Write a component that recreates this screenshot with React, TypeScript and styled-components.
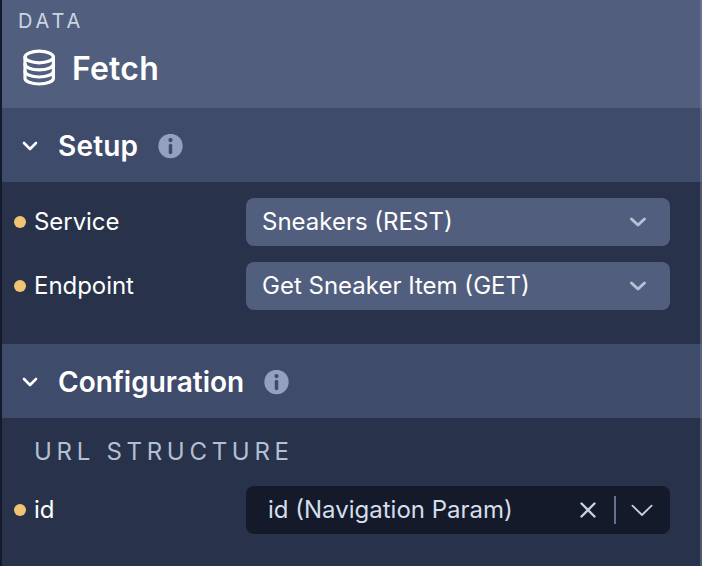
import React from "react";
import styled, { createGlobalStyle } from "styled-components";

const GlobalStyle = createGlobalStyle`
  * { box-sizing: border-box; }
  body { margin: 0; background: #28324a; }
`;

const Panel = styled.main`
  width: 702px;
  height: 566px;
  overflow: hidden;
  display: flex;
  flex-direction: column;
  background: #28324a;
  border-left: 2px solid #141a2b;
  color: #fff;
  font-family: Inter, "Liberation Sans", sans-serif;
  box-shadow: inset -2px 0 #4f586d;
`;

const Header = styled.header`
  height: 108px;
  flex: none;
  padding: 9px 16px 0;
  background: #515e7d;
  border-right: 2px solid #677190;
`;

const Category = styled.div`
  font-size: 20px;
  line-height: 24px;
  letter-spacing: 3.8px;
  color: #cbd5e4;
`;

const TitleRow = styled.div`
  display: flex;
  align-items: center;
  gap: 16px;
  height: 40px;
  margin-top: 15px;
  padding-left: 4px;
`;

const Title = styled.h1`
  margin: 2px 0 0;
  font-size: 32px;
  line-height: 40px;
  font-weight: 600;
  letter-spacing: 0.2px;
`;

const SectionBar = styled.div`
  display: flex;
  align-items: center;
  height: 74px;
  flex: none;
  padding: 2px 20px 0 19px;
  background: #3f4b6b;
  border-right: 2px solid #596480;
`;

const SectionTitle = styled.h2<{ $spacing: number }>`
  margin: 0 19.5px 0 19px;
  font-size: 28px;
  line-height: 36px;
  font-weight: 600;
  letter-spacing: ${(p) => p.$spacing}px;
`;

const Fields = styled.div<{ $height: number; $top: number }>`
  display: flex;
  flex-direction: column;
  gap: 16px;
  height: ${(p) => p.$height}px;
  flex: none;
  padding: ${(p) => p.$top}px 30px 0 12px;
`;

const Field = styled.div`
  display: grid;
  grid-template-columns: 12px 204px 424px;
  column-gap: 8px;
  align-items: center;
  height: 48px;
  font-size: 24px;
  line-height: 32px;
`;

const Dot = styled.span`
  width: 12px;
  height: 12px;
  border-radius: 50%;
  background: #f2c374;
`;

const Label = styled.span`
  letter-spacing: -0.05px;
`;

const Select = styled.div`
  display: flex;
  align-items: center;
  justify-content: space-between;
  height: 48px;
  padding: 0 22px 0 16px;
  border-radius: 8px;
  background: #515e7d;
`;

const Combo = styled(Select)`
  padding: 0 16px 0 22px;
  background: #141a29;
  color: #d5deec;
`;

const Controls = styled.div`
  display: flex;
  align-items: center;
`;

const Divider = styled.span`
  width: 2px;
  height: 28px;
  margin: 0 14px 0 17px;
  background: #65718f;
`;

const GroupTitle = styled.h3`
  margin: 0 0 2px 20px;
  font-size: 24px;
  line-height: 32px;
  height: 32px;
  font-weight: 400;
  letter-spacing: 4.7px;
  color: #b3c0d4;
`;

const Icon = styled.svg`
  display: block;
  flex: none;
  fill: none;
  stroke-linecap: round;
  stroke-linejoin: round;
`;

const DatabaseIcon = () => (
  <Icon width="34" height="38" viewBox="0 0 34 38" stroke="#fff" strokeWidth="3.2">
    <ellipse cx="17.2" cy="8" rx="14.2" ry="5.8" />
    <path d="M3 8v21.2c0 3.2 6.4 5.8 14.2 5.8s14.2-2.6 14.2-5.8V8" />
    <path d="M3 15.1c0 3.2 6.4 5.8 14.2 5.8s14.2-2.6 14.2-5.8M3 22.2c0 3.2 6.4 5.8 14.2 5.8s14.2-2.6 14.2-5.8" />
  </Icon>
);

const SectionChevron = () => (
  <Icon width="18" height="12" viewBox="0 0 18 12" stroke="#fff" strokeWidth="2.6">
    <path d="M3 3l6 6 6-6" />
  </Icon>
);

const InfoIcon = () => (
  <Icon width="25" height="25" viewBox="0 0 25 25">
    <circle cx="12.5" cy="12" r="12.2" fill="#959fbe" />
    <circle cx="12.5" cy="6.1" r="2.1" fill="#3f4b6b" />
    <path d="M12.5 11.5v7" stroke="#3f4b6b" strokeWidth="3.5" />
  </Icon>
);

const SelectChevron = () => (
  <Icon width="20" height="14" viewBox="0 0 20 14" stroke="#b7c1d5" strokeWidth="3">
    <path d="M3.5 4L10 10l6.5-6" />
  </Icon>
);

const ClearIcon = () => (
  <Icon width="18" height="18" viewBox="0 0 18 18" stroke="#c6d0e0" strokeWidth="2.4">
    <path d="M2.5 2.5l13 13M15.5 2.5l-13 13" />
  </Icon>
);

const ComboChevron = () => (
  <Icon width="24" height="14" viewBox="0 0 24 14" stroke="#c6d0e0" strokeWidth="1.8">
    <path d="M2.4 2.6L12 12l9.6-9.4" />
  </Icon>
);

function Section({ title, spacing = 0 }: { title: string; spacing?: number }) {
  return (
    <SectionBar>
      <SectionChevron />
      <SectionTitle $spacing={spacing}>{title}</SectionTitle>
      <InfoIcon />
    </SectionBar>
  );
}

function SelectField({ label, value }: { label: string; value: string }) {
  return (
    <Field>
      <Dot />
      <Label>{label}</Label>
      <Select>
        <span>{value}</span>
        <SelectChevron />
      </Select>
    </Field>
  );
}

export default function App() {
  return (
    <>
      <GlobalStyle />
      <Panel>
        <Header>
          <Category>DATA</Category>
          <TitleRow>
            <DatabaseIcon />
            <Title>Fetch</Title>
          </TitleRow>
        </Header>
        <Section title="Setup" spacing={0.2} />
        <Fields $height={162} $top={16}>
          <SelectField label="Service" value="Sneakers (REST)" />
          <SelectField label="Endpoint" value="Get Sneaker Item (GET)" />
        </Fields>
        <Section title="Configuration" />
        <Fields $height={148} $top={18}>
          <GroupTitle>URL STRUCTURE</GroupTitle>
          <Field>
            <Dot />
            <Label>id</Label>
            <Combo>
              <span>id (Navigation Param)</span>
              <Controls>
                <ClearIcon />
                <Divider />
                <ComboChevron />
              </Controls>
            </Combo>
          </Field>
        </Fields>
      </Panel>
    </>
  );
}
